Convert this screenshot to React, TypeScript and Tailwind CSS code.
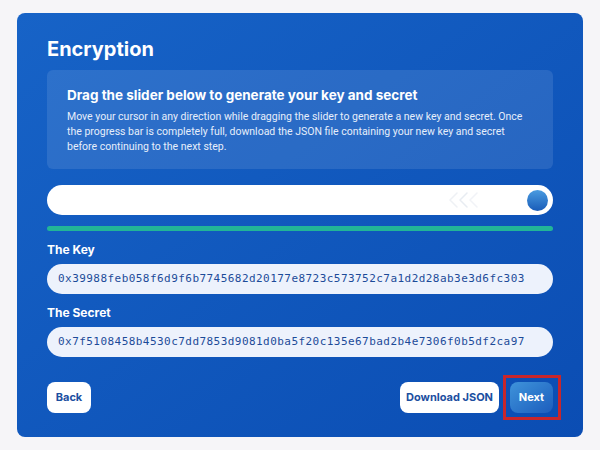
export default function App() {
  const key = "0x39988feb058f6d9f6b7745682d20177e8723c573752c7a1d2d28ab3e3d6fc303";
  const secret = "0x7f5108458b4530c7dd7853d9081d0ba5f20c135e67bad2b4e7306f0b5df2ca97";
  const mono = { fontFamily: "'DejaVu Sans Mono', 'Liberation Mono', monospace" };

  return (
    <div className="w-[600px] h-[450px] bg-[#f6f5f8] pt-[13px] pl-[17px]" style={{ fontFamily: "Inter, 'Noto Sans', sans-serif" }}>
      <div className="w-[566px] h-[424px] rounded-lg bg-gradient-to-br from-[#1763c7] to-[#0b4db3] pt-[22px] px-[30px] flex flex-col">
        <h1 className="text-[20px] leading-[28px] font-bold text-white">Encryption</h1>

        <div className="mt-[7px] rounded-md bg-white/10 px-5 pt-[15px] pb-[15px]">
          <h2 className="text-[13.5px] leading-[20px] font-bold text-white">Drag the slider below to generate your key and secret</h2>
          <p className="mt-[4px] text-[10.5px] leading-[15px] text-[#e6eefb] whitespace-nowrap" style={{ fontFamily: "Roboto, 'Noto Sans', sans-serif" }}>
            Move your cursor in any direction while dragging the slider to generate a new key and secret. Once
            <br />
            the progress bar is completely full, download the JSON file containing your new key and secret
            <br />
            before continuing to the next step.
          </p>
        </div>

        <div className="mt-4 h-[30px] rounded-full bg-white flex items-center justify-end pr-[5px]">
          <svg width="34" height="16" viewBox="0 0 34 16" className="mr-[45px]" fill="none" strokeWidth="1.5" strokeLinecap="round" strokeLinejoin="round">
            <polyline points="9,1 2,8 9,15" stroke="#eef1f5" />
            <polyline points="19,1 12,8 19,15" stroke="#e8ecf2" />
            <polyline points="29,1 22,8 29,15" stroke="#f1f3f7" />
          </svg>
          <div className="w-[21px] h-[21px] rounded-full bg-gradient-to-b from-[#4a9be0] to-[#1a5cb8]" />
        </div>

        <div className="mt-[11px] h-[5px] rounded-full bg-[#22b597]" />

        <label className="mt-[11px] text-[12px] leading-[16px] font-bold text-white">The Key</label>
        <div className="mt-[6px] h-[30px] rounded-full bg-[#edf2fc] flex items-center px-[11px]">
          <span className="text-[11px] tracking-[0.45px] text-[#1c4b99]" style={mono}>{key}</span>
        </div>

        <label className="mt-[11px] text-[12px] leading-[16px] font-bold text-white">The Secret</label>
        <div className="mt-[6px] h-[30px] rounded-full bg-[#edf2fc] flex items-center px-[11px]">
          <span className="text-[11px] tracking-[0.45px] text-[#1c4b99]" style={mono}>{secret}</span>
        </div>

        <div className="mt-[25px] flex items-center">
          <button className="h-[31px] w-[44px] rounded-lg bg-white text-[11px] font-bold text-[#1c4f9f]">Back</button>
          <div className="ml-auto flex items-center gap-[11px]">
            <button className="h-[31px] w-[99px] rounded-lg bg-white text-[11px] font-bold text-[#1c4f9f]">Download JSON</button>
            <div className="relative">
              <button className="h-[31px] w-[43px] rounded-lg bg-gradient-to-br from-[#3f93da] to-[#1d5dbd] text-[11px] font-bold text-white">Next</button>
              <div className="absolute -top-[7px] -bottom-[7px] -left-[7px] -right-[8px] border-[3px] border-[#c8262b]" />
            </div>
          </div>
        </div>
      </div>
    </div>
  );
}
